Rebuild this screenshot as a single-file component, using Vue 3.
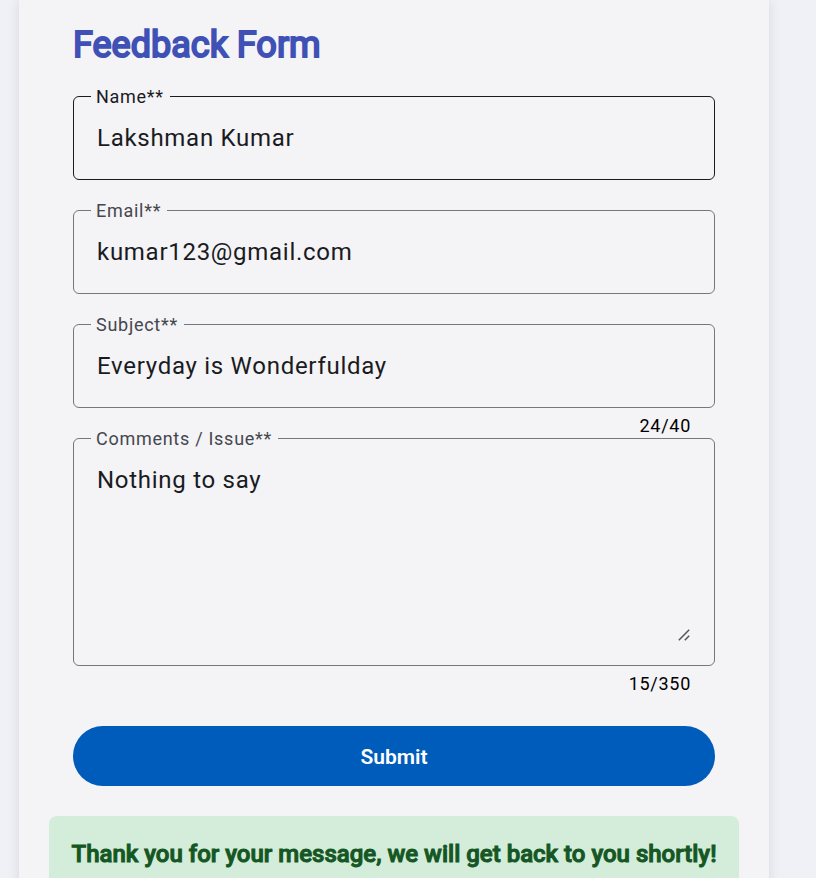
<script setup>
import { ref } from 'vue'

const name = ref('Lakshman Kumar')
const email = ref('kumar123@gmail.com')
const subject = ref('Everyday is Wonderfulday')
const comments = ref('Nothing to say')
// Counts as reported by the form after submission
const commentCount = ref(15)
const sent = ref(true)
</script>

<template>
  <main class="page">
    <section class="card">
      <form class="form" @submit.prevent="sent = true">
        <h1 class="title">Feedback Form</h1>

        <div class="field strong">
          <label class="label" for="name">Name**</label>
          <input id="name" v-model="name" class="control" type="text" />
        </div>
        <div class="hint"></div>

        <div class="field">
          <label class="label" for="email">Email**</label>
          <input id="email" v-model="email" class="control" type="email" spellcheck="false" />
        </div>
        <div class="hint"></div>

        <div class="field">
          <label class="label" for="subject">Subject**</label>
          <input id="subject" v-model="subject" class="control" type="text" maxlength="40" />
        </div>
        <div class="hint">{{ subject.length }}/40</div>

        <div class="field">
          <label class="label" for="comments">Comments / Issue**</label>
          <textarea
            id="comments"
            v-model="comments"
            class="control area"
            rows="5"
            maxlength="350"
            @input="commentCount = comments.length"
          ></textarea>
          <svg class="grip" width="12" height="12" viewBox="0 0 12 12" aria-hidden="true">
            <path d="M0.8 11.2 L11.2 0.8 M6.8 11.2 L11.2 6.8" fill="none" stroke="#55554f" stroke-width="1.5" />
          </svg>
        </div>
        <div class="hint">{{ commentCount }}/350</div>

        <button class="submit" type="submit">Submit</button>
      </form>

      <p v-if="sent" class="alert" role="status">
        Thank you for your message, we will get back to you shortly!
      </p>
    </section>
  </main>
</template>

<style>
body {
  margin: 0;
  background: #f0f1f6;
}
</style>

<style scoped>
.page {
  box-sizing: border-box;
  height: 100vh;
  overflow: auto;
  scrollbar-width: none;
  padding: 0 47px 0 19px;
  font-family: Roboto, "Liberation Sans", sans-serif;
  color: #1a1b1f;
}

.card {
  box-sizing: border-box;
  max-width: 750px;
  min-height: 100%;
  margin: 0 auto;
  padding: 24px 30px 30px;
  background: #f4f3f6;
  box-shadow: 0 0 12px rgba(0, 0, 0, 0.1);
}

.form {
  display: flex;
  flex-direction: column;
  padding: 0 24px;
}

.title {
  margin: 0 0 30px;
  font-size: 36px;
  line-height: 42px;
  font-weight: 400;
  -webkit-text-stroke: 2px currentColor;
  color: #3f51b5;
}

.field {
  position: relative;
  display: flex;
  padding: 23px;
  border: 1px solid #75777f;
  border-radius: 6px;
}

.field.strong {
  border-color: #1a1b1f;
}

.label {
  position: absolute;
  top: -12px;
  left: 17px;
  padding: 0 6px 0 5px;
  background: #f4f3f6;
  color: #44474e;
  font-size: 18px;
  line-height: 24px;
  letter-spacing: 0.04em;
}

.strong .label {
  color: #1a1b1f;
}

.control {
  flex: 1;
  min-width: 0;
  box-sizing: border-box;
  height: 36px;
  margin: 0;
  padding: 0;
  border: 0;
  outline: 0;
  background: transparent;
  color: #1a1b1f;
  font-family: inherit;
  font-size: 24px;
  line-height: 36px;
  letter-spacing: 0.03em;
}

.area {
  height: 180px;
  resize: vertical;
}

.area::-webkit-resizer {
  background: transparent;
}

.grip {
  position: absolute;
  right: 24px;
  bottom: 24px;
  pointer-events: none;
}

.hint {
  height: 30px;
  padding-right: 24px;
  color: #000;
  font-size: 18px;
  line-height: 36px;
  letter-spacing: 0.04em;
  text-align: right;
}

.submit {
  height: 60px;
  margin-top: 30px;
  padding: 2px 0 0;
  border: 0;
  border-radius: 30px;
  background: #005cbb;
  color: #fff;
  font-family: inherit;
  font-size: 21px;
  font-weight: 600;
  cursor: pointer;
}

.alert {
  margin: 30px 0 0;
  padding: 20px;
  border-radius: 8px;
  background: #d4edda;
  color: #155724;
  font-size: 24px;
  line-height: 36px;
  font-weight: 500;
  -webkit-text-stroke: 1px currentColor;
  text-align: center;
}
</style>
